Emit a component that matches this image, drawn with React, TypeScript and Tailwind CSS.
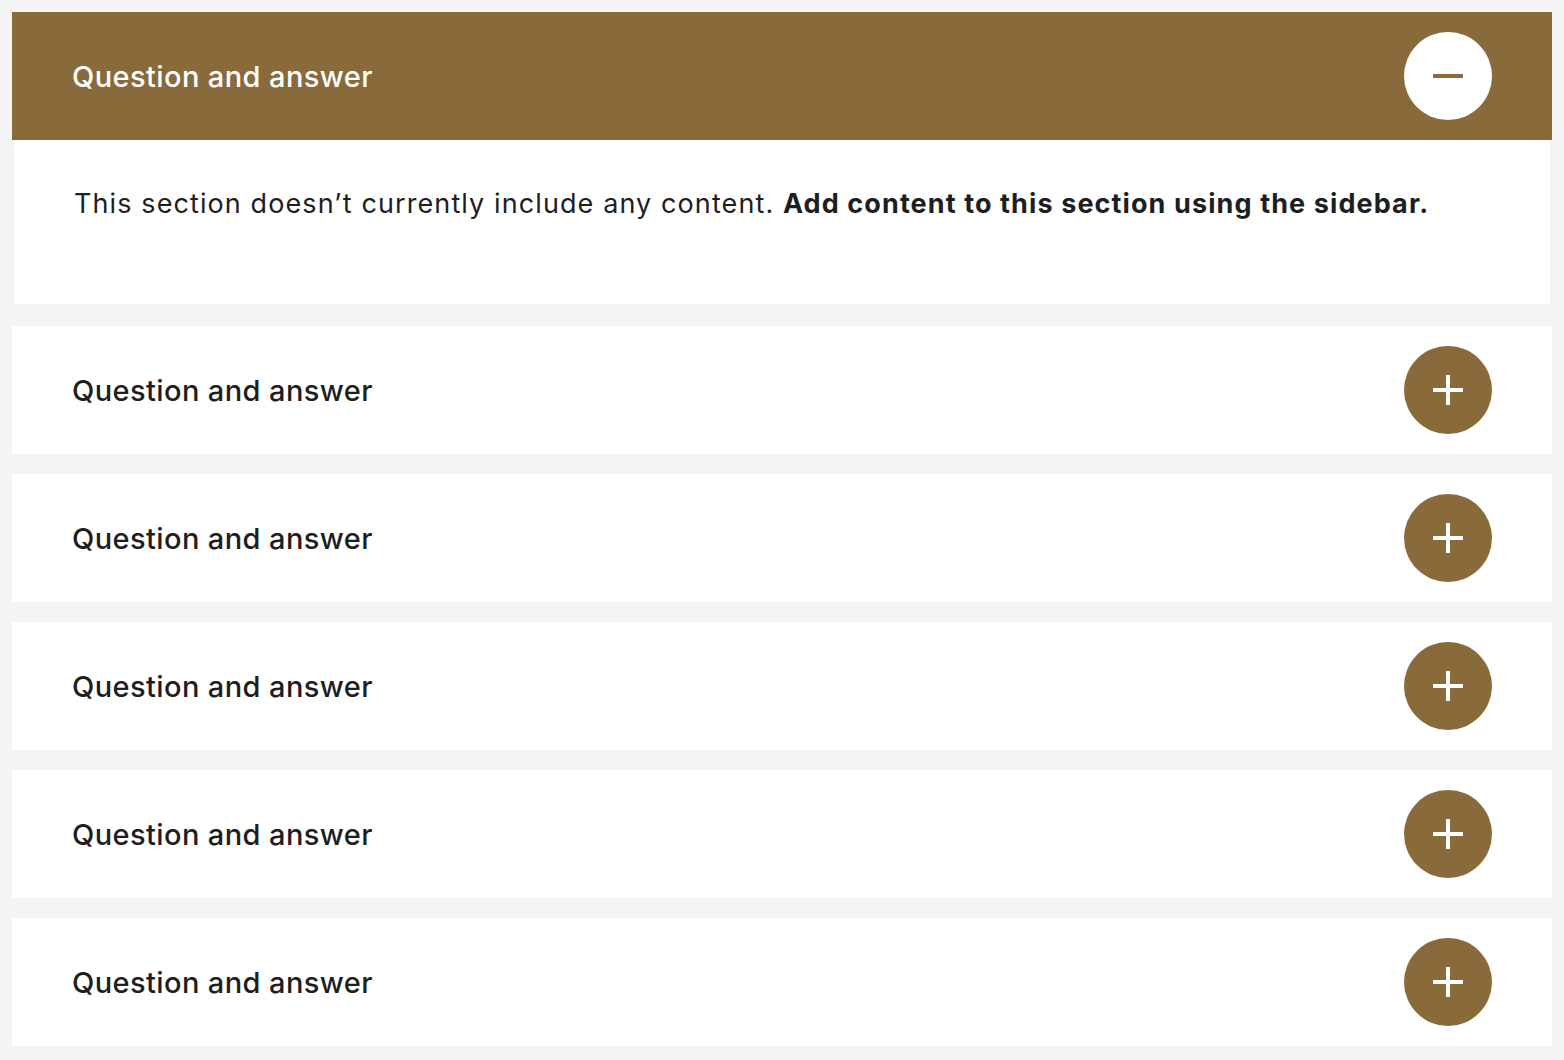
import React, { useState } from 'react';

// Accordion list: one open item with a placeholder panel, the rest closed

const items = Array.from({ length: 6 }, (_, i) => ({ id: i, title: 'Question and answer' }));

const ToggleIcon: React.FC<{ open: boolean }> = ({ open }) => (
  <span
    className={`w-[88px] h-[88px] rounded-full flex items-center justify-center shrink-0 ${
      open ? 'bg-white' : 'bg-[#886a3b]'
    }`}
  >
    <svg width="30" height="30" viewBox="0 0 30 30" fill="none">
      <rect x="0" y="13" width="30" height="4" fill={open ? '#886a3b' : '#ffffff'} />
      {!open && <rect x="13" y="0" width="4" height="30" fill="#ffffff" />}
    </svg>
  </span>
);

export default function App() {
  const [openId, setOpenId] = useState<number | null>(0);

  return (
    <div className="min-h-screen bg-[#f4f4f4] px-3 pt-3 pb-[14px] flex flex-col gap-5 font-['Inter','Noto_Sans',sans-serif]">
      {items.map((item) => {
        const isOpen = openId === item.id;
        return (
          <div key={item.id} className="flex flex-col">
            <button
              onClick={() => setOpenId(isOpen ? null : item.id)}
              className={`w-full h-32 flex items-center justify-between px-[60px] text-left ${
                isOpen ? 'bg-[#886a3b] text-white' : 'bg-white text-[#1e1e1e]'
              }`}
            >
              <span className="text-[29px] font-medium leading-none tracking-[0.4px]">{item.title}</span>
              <ToggleIcon open={isOpen} />
            </button>
            {isOpen && (
              <div className="mx-[2px] mb-[2px] bg-white h-[164px] px-[60px] pt-[44px]">
                <p className="text-[27px] leading-[39px] tracking-[1.1px] text-[#1e1e1e]">
                  This section doesn’t currently include any content.{' '}
                  <strong className="font-bold">Add content to this section using the sidebar.</strong>
                </p>
              </div>
            )}
          </div>
        );
      })}
    </div>
  );
}
